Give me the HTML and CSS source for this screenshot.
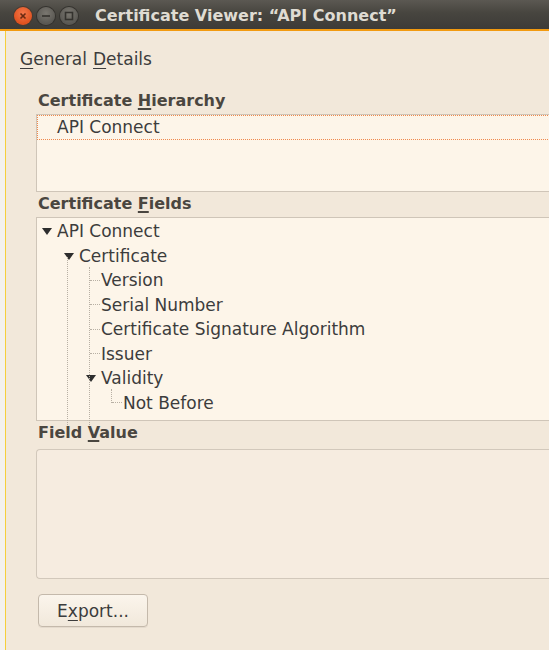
FILE: index.html
```html
<!DOCTYPE html>
<html>
<head>
<meta charset="utf-8">
<link rel="stylesheet" href="styles.css">
</head>
<body>
<div class="window">
  <div class="titlebar">
    <div class="wbtns">
      <span class="wbtn close"><svg width="18" height="18" viewBox="0 0 18 18"><line x1="6.5" y1="6.5" x2="11.5" y2="11.5"/><line x1="11.5" y1="6.5" x2="6.5" y2="11.5"/></svg></span>
      <span class="wbtn"><svg width="18" height="18" viewBox="0 0 18 18"><line x1="5" y1="9" x2="13" y2="9"/></svg></span>
      <span class="wbtn"><svg width="18" height="18" viewBox="0 0 18 18"><rect x="5.5" y="5.5" width="7" height="7"/></svg></span>
    </div>
    <div class="title">Certificate Viewer: “API Connect”</div>
  </div>
  <div class="frame">
    <div class="edge"></div>
    <div class="content">
      <div class="tabs"><span class="tab"><u>G</u>eneral</span><span class="tab"><u>D</u>etails</span></div>
      <div class="panel">
        <div class="label">Certificate <u>H</u>ierarchy</div>
        <div class="box hier">
          <div class="hrow">API Connect</div>
        </div>
        <div class="label">Certificate <u>F</u>ields</div>
        <div class="fieldswrap">
          <div class="box fields">
            <div class="tree">
              <div class="trow l0"><span class="tri"></span>API Connect</div>
              <div class="trow l1"><span class="tri"></span>Certificate</div>
              <div class="trow l2 leaf"><span class="conn"></span>Version</div>
              <div class="trow l2 leaf"><span class="conn"></span>Serial Number</div>
              <div class="trow l2 leaf"><span class="conn"></span>Certificate Signature Algorithm</div>
              <div class="trow l2 leaf"><span class="conn"></span>Issuer</div>
              <div class="trow l2"><span class="tri"></span>Validity</div>
              <div class="trow l3 leaf"><span class="conn"></span>Not Before</div>
            </div>
          </div>
          <div class="vline v1"></div>
          <div class="vline v2"></div>
          <div class="vline v3"></div>
        </div>
        <div class="label">Field <u>V</u>alue</div>
        <div class="box value"></div>
        <div class="btnrow"><button class="btn">E<u>x</u>port...</button></div>
      </div>
    </div>
  </div>
</div>
</body>
</html>
```

FILE: styles.css
```css
html, body {
  margin: 0;
  padding: 0;
  width: 549px;
  height: 650px;
  overflow: hidden;
  background: #f2e8da;
  font-family: "DejaVu Sans", "Noto Sans", sans-serif;
}
.window {
  width: 549px;
  height: 650px;
  display: flex;
  flex-direction: column;
}
.titlebar {
  height: 29px;
  flex: none;
  background: linear-gradient(#5b5852, #47453f 45%, #3d3b37);
  display: flex;
  align-items: center;
  border-bottom: 2px solid #f29a10;
  box-sizing: content-box;
}
.wbtns {
  display: flex;
  gap: 5px;
  margin-left: 14px;
  margin-top: 2px;
}
.wbtn {
  width: 18px;
  height: 18px;
  border-radius: 50%;
  background: radial-gradient(circle at 50% 35%, #7a7770, #5a5853 70%);
  box-shadow: 0 0 0 1px #34322e;
  display: block;
}
.wbtn svg {
  display: block;
  stroke: #34322e;
  stroke-width: 1.6;
  fill: none;
}
.wbtn.close {
  background: radial-gradient(circle at 50% 35%, #f4774a, #e0521f 70%);
  box-shadow: 0 0 0 1px #4a3a30;
}
.wbtn.close svg { stroke: #6b2a12; }
.title {
  margin-left: 17px;
  margin-top: 2px;
  color: #dfdbd2;
  font-weight: bold;
  font-size: 16px;
}
.frame {
  flex: 1;
  display: flex;
}
.edge {
  width: 5px;
  background: #f3f1ee;
  border-right: 1px solid #f5cf3c;
  flex: none;
}
.content {
  flex: 1;
  padding-left: 14px;
  min-width: 0;
}
.tabs {
  margin-top: 16px;
  font-size: 17px;
  color: #3c3c3c;
  display: flex;
  gap: 6px;
  height: 24px;
  align-items: center;
}
.tab u { text-decoration-thickness: 1px; text-underline-offset: 3px; }
.panel {
  padding-left: 16px;
  margin-top: 18px;
}
.label {
  font-weight: bold;
  font-size: 16px;
  color: #4a4640;
  height: 24px;
  line-height: 24px;
  padding-left: 2px;
}
.label u { text-decoration-thickness: 2px; text-underline-offset: 2px; }
.box {
  border: 1px solid #cfc5b8;
  border-right: none;
  background: #fdf5e9;
  box-sizing: border-box;
}
.hier {
  height: 78px;
  margin-top: 1px;
}
.hrow {
  height: 25px;
  line-height: 25px;
  box-sizing: border-box;
  padding-left: 20px;
  font-size: 17px;
  color: #3c3c3c;
  background:
    repeating-linear-gradient(90deg, #f0884c 0 1px, transparent 1px 2px) left top / 100% 1px no-repeat,
    repeating-linear-gradient(90deg, #f0884c 0 1px, transparent 1px 2px) left bottom / 100% 1px no-repeat,
    repeating-linear-gradient(180deg, #f0884c 0 1px, transparent 1px 2px) left top / 1px 100% no-repeat;
}
.fieldswrap {
  position: relative;
  margin-top: 1px;
}
.fields {
  height: 204px;
  overflow: hidden;
}
.tree {
  padding-top: 1px;
}
.trow {
  height: 24.5px;
  line-height: 24px;
  font-size: 17px;
  color: #3c3c3c;
  display: flex;
  align-items: center;
  white-space: nowrap;
}
.trow.l0 { padding-left: 5px; }
.trow.l1 { padding-left: 27px; }
.trow.l2 { padding-left: 49px; }
.trow.l3 { padding-left: 71px; }
.tri {
  width: 0;
  height: 0;
  border-left: 5px solid transparent;
  border-right: 5px solid transparent;
  border-top: 7px solid #2e2e2e;
  margin-right: 5px;
  margin-top: 1px;
}
.conn {
  width: 10px;
  border-top: 1px dotted #b8b0a4;
  margin-left: 4px;
  margin-right: 1px;
}
.vline {
  position: absolute;
  border-left: 1px dotted #b8b0a4;
  width: 0;
}
.v1 { left: 31px; top: 40px; height: 168px; }
.v2 { left: 53px; top: 50px; height: 158px; }
.v3 { left: 75px; top: 172px; height: 14px; }
.value {
  height: 130px;
  background: #f6ece0;
  border-radius: 4px 0 0 4px;
  border-color: #d2c8bb;
  margin-top: 4px;
}
.btnrow {
  margin-top: 15px;
  padding-left: 2px;
}
.btn {
  width: 110px;
  height: 33px;
  border: 1px solid #c4b9ab;
  border-radius: 4px;
  background: linear-gradient(#fbf5ec, #f1e8db);
  box-shadow: 0 1px 0 #e4dacd;
  font-family: "DejaVu Sans", "Noto Sans", sans-serif;
  font-size: 17px;
  color: #3c3c3c;
  padding: 0;
}
.btn u { text-decoration-thickness: 1px; text-underline-offset: 3px; }
```
